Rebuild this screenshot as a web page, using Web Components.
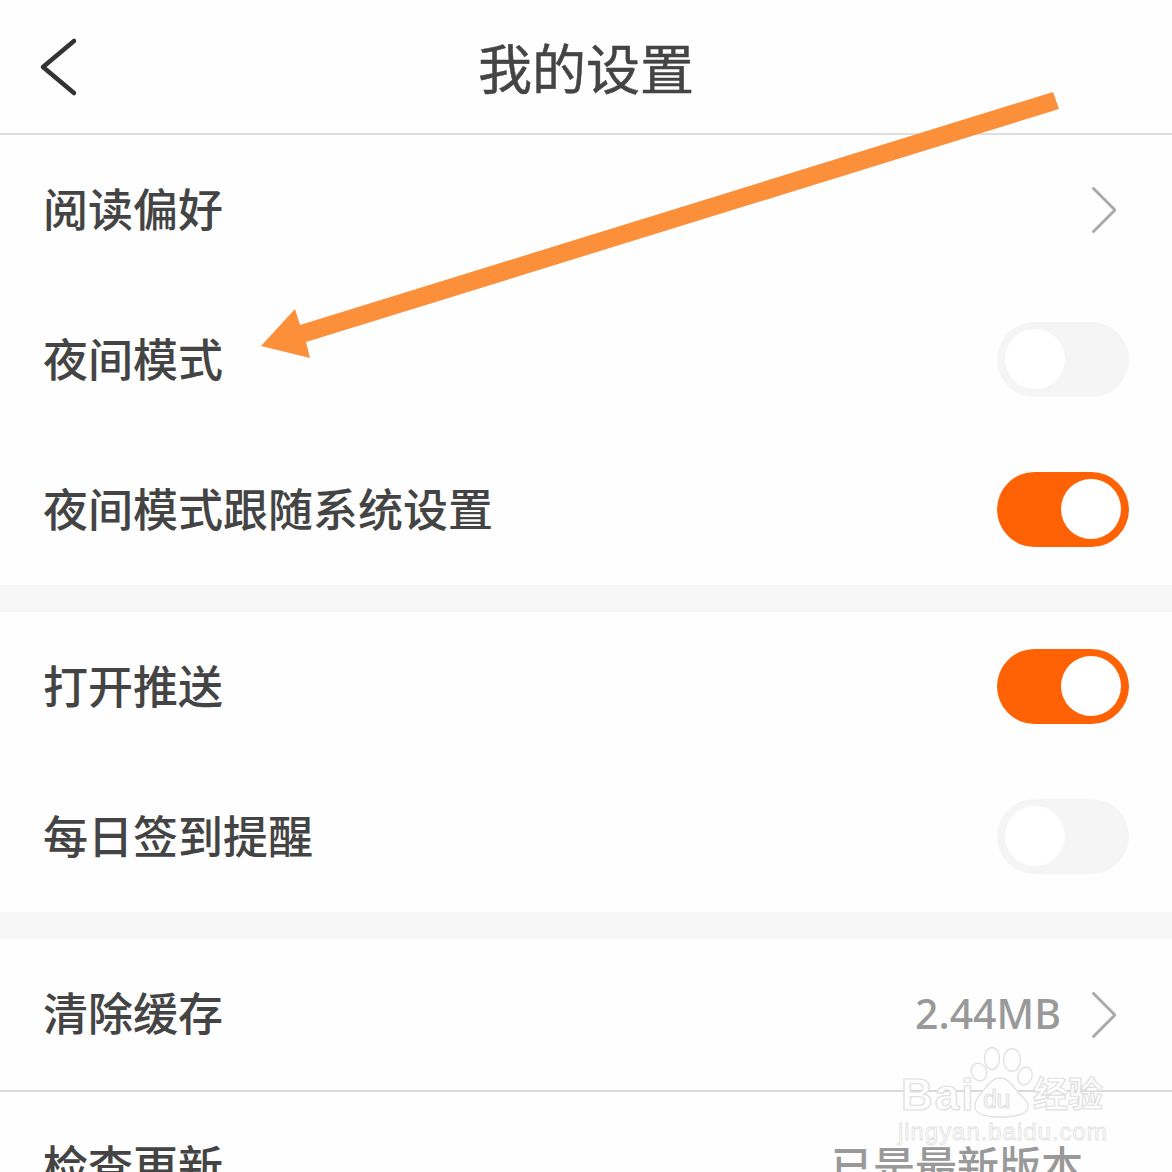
<!DOCTYPE html>
<html lang="zh"><head><meta charset="utf-8">
<style>
html,body{margin:0;padding:0;background:#fefefe}
body{width:1172px;height:1172px;overflow:hidden;position:relative;font-family:"Noto Sans CJK SC","Noto Sans",sans-serif;color:#444}
</style></head><body>
<settings-page>
  <nav-bar title="我的设置"></nav-bar>
  <setting-row height="150"><span>阅读偏好</span><row-chevron slot="end" low></row-chevron></setting-row>
  <setting-row height="150"><span>夜间模式</span><toggle-switch slot="end"></toggle-switch></setting-row>
  <setting-row height="150"><span>夜间模式跟随系统设置</span><toggle-switch slot="end" on></toggle-switch></setting-row>
  <section-gap></section-gap>
  <setting-row height="150"><span>打开推送</span><toggle-switch slot="end" on></toggle-switch></setting-row>
  <setting-row height="150"><span>每日签到提醒</span><toggle-switch slot="end"></toggle-switch></setting-row>
  <section-gap></section-gap>
  <setting-row height="153" divider><span>清除缓存</span><row-value slot="end" latin>2.44MB</row-value><row-chevron slot="end" low></row-chevron></setting-row>
  <setting-row height="150"><span>检查更新</span><row-value slot="end" wide>已是最新版本</row-value></setting-row>
  <arrow-overlay></arrow-overlay>
  <baidu-mark></baidu-mark>
</settings-page>
<script>
function def(name, css, html, extra){
  customElements.define(name, class extends HTMLElement{
    constructor(){super();const r=this.attachShadow({mode:'open'});r.innerHTML='<style>'+css+'</style>'+html;}
    connectedCallback(){ if(extra) extra(this); }
  });
}
def('settings-page',':host{display:block;width:1172px;height:1172px;overflow:hidden;position:relative}','<slot></slot>');
def('nav-bar',`:host{display:flex;align-items:center;justify-content:center;height:133px;border-bottom:2px solid #dedede;position:relative;font-size:54px;line-height:1;color:#444;font-weight:400;-webkit-text-stroke:.5px #444}
 svg{position:absolute;left:0;top:0}`,
 `<svg width="100" height="134" viewBox="0 0 100 134"><path d="M74 41 43 67 74 93" fill="none" stroke="#333" stroke-width="4.500" stroke-linecap="round" stroke-linejoin="round"/></svg><span id="t"></span>`,
 el=>{el.shadowRoot.getElementById('t').textContent=el.getAttribute('title');});
def('setting-row',`:host{display:flex;align-items:center;justify-content:space-between;box-sizing:border-box;padding:0 43px 2px 43px;font-size:45px;line-height:1;color:#444;font-weight:500}
 :host([divider]){border-bottom:2px solid #d9d9d9;padding-bottom:2px}
 .s{display:block;padding-bottom:4px}
 .e{display:flex;align-items:center}`,
 `<div class="s"><slot></slot></div><div class="e"><slot name="end"></slot></div>`,
 el=>{el.style.height=el.getAttribute('height')+'px';});
def('section-gap',':host{display:block;height:27px;background:#f7f7f7}','');
def('row-chevron',':host{display:block;width:24px;height:46px;margin-right:13px}:host([low]){margin-top:2px}svg{display:block}',
 `<svg width="24" height="46" viewBox="0 0 24 46"><path d="M1.500 1.500 23 23 1.500 44.500" fill="none" stroke="#aaa" stroke-width="3" stroke-linecap="round" stroke-linejoin="round"/></svg>`);
def('row-value',`:host{display:block;color:#999;font-size:41px;line-height:1;margin-right:31px;font-weight:500;font-family:"Noto Sans","Noto Sans CJK SC",sans-serif}
 :host([wide]){font-size:42px;font-family:"Noto Sans CJK SC",sans-serif;margin-right:46px;padding-bottom:4px}`,'<slot></slot>');
def('toggle-switch',`:host{display:block;width:132px;height:75px;border-radius:38px;background:#f5f5f5;position:relative}
 :host([on]){background:#ff6204}
 i{position:absolute;top:7px;left:8px;width:60px;height:60px;border-radius:50%;background:#fff}
 :host([on]) i{left:64px}`,'<i></i>');
def('arrow-overlay',':host{position:absolute;left:0;top:0;width:1172px;height:1172px;pointer-events:none}svg{display:block}',
 `<svg width="1172" height="1172" viewBox="0 0 1172 1172"><path d="M1053 92 1059 109 306 342 310 358 261 346 295 309 300 325Z" fill="#fc8f3a"/></svg>`);
def('baidu-mark',`:host{position:absolute;left:890px;top:1040px;width:230px;height:110px;pointer-events:none;font-family:"Liberation Sans",sans-serif}
 svg{position:absolute;left:0;top:0}
 span{position:absolute;white-space:nowrap;color:#fefefe;-webkit-text-stroke:1.200px #e0e0e0;line-height:1}
 .b{left:11px;top:33px;font-size:44px;font-weight:700;letter-spacing:2px}
 .d{left:93px;top:47px;font-size:25px;letter-spacing:-.5px;-webkit-text-stroke:1px #e0e0e0}
 .c{left:143px;top:34px;font-size:35px;font-weight:700;font-family:"Noto Sans CJK SC",sans-serif}
 .u{left:8px;top:80px;font-size:24px;letter-spacing:.95px;-webkit-text-stroke:.8px #e0e0e0}`,
 `<svg width="230" height="110" viewBox="0 0 230 110" fill="#fefefe" stroke="#e0e0e0" stroke-width="1.300">
 <ellipse cx="102" cy="18.500" rx="7.500" ry="11"/><ellipse cx="122" cy="20" rx="8.500" ry="11.500"/><ellipse cx="89" cy="32" rx="7.500" ry="9" transform="rotate(-25 89 32)"/><ellipse cx="135" cy="36" rx="7" ry="9" transform="rotate(20 135 36)"/>
 <path d="M110 38C102 38 98 45 93 51 88 57 85 60 85 66 85 74 93 77 110 77S138 74 138 66C138 60 132 57 127 51 122 45 118 38 110 38Z"/></svg>
 <span class="b">Bai</span><span class="d">du</span><span class="c">经验</span><span class="u">jingyan.baidu.com</span>`);
</script>
</body></html>
